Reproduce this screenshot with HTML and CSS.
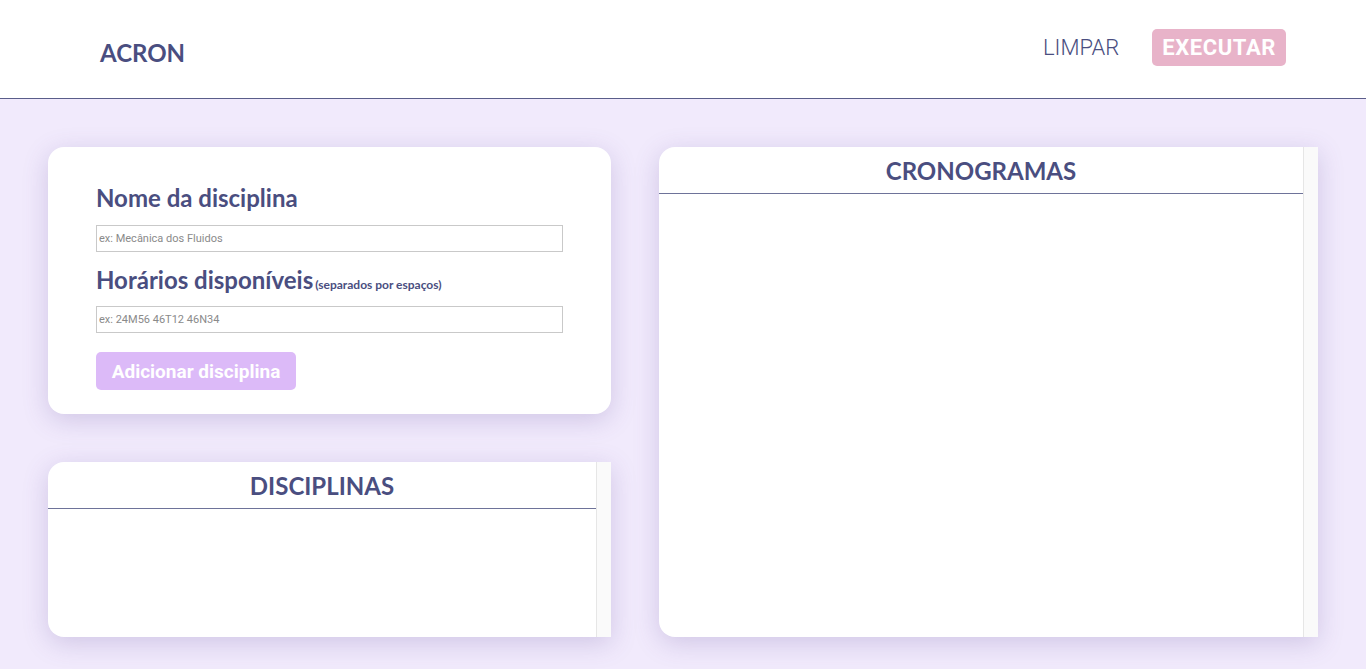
FILE: index.html
```html
<!DOCTYPE html>
<html lang="pt">
<head>
<meta charset="utf-8">
<title>ACRON</title>
<link rel="stylesheet" href="styles.css">
</head>
<body>
<header class="topbar">
  <div class="brand">ACRON</div>
  <nav class="actions">
    <button class="btn-clear">LIMPAR</button>
    <button class="btn-run">EXECUTAR</button>
  </nav>
</header>
<main class="layout">
  <div class="left-col">
    <section class="card form-card">
      <label class="field-label">Nome da disciplina</label>
      <input class="field" type="text" placeholder="ex: Mecânica dos Fluidos">
      <label class="field-label second">Horários disponíveis<span class="hint">(separados por espaços)</span></label>
      <input class="field field-second" type="text" placeholder="ex: 24M56 46T12 46N34">
      <button class="btn-add">Adicionar disciplina</button>
    </section>
    <section class="card list-card small">
      <div class="list-body">
        <h2 class="list-title">DISCIPLINAS</h2>
      </div>
      <div class="scrolltrack"></div>
    </section>
  </div>
  <section class="card list-card big">
    <div class="list-body">
      <h2 class="list-title">CRONOGRAMAS</h2>
    </div>
    <div class="scrolltrack"></div>
  </section>
</main>
</body>
</html>
```
FILE: styles.css
```css
* { box-sizing: border-box; }
html, body { margin: 0; padding: 0; }
body {
  background: #f1eafc;
  font-family: "Lato", "Roboto", sans-serif;
  color: #4a4e80;
  height: 669px;
  overflow: hidden;
}
.topbar {
  height: 99px;
  background: #ffffff;
  border-bottom: 1px solid #5a5d8a;
  display: flex;
  align-items: center;
  justify-content: space-between;
  padding: 0 80px 0 100px;
}
.brand {
  font-family: "Lato", sans-serif;
  font-weight: 700;
  font-size: 24px;
  color: #4a4e80;
  margin-top: 6px;
}
.actions {
  display: flex;
  align-items: center;
  gap: 33px;
  margin-top: -4px;
}
.btn-clear {
  background: none;
  border: none;
  padding: 0;
  font-family: "Roboto", sans-serif;
  font-weight: 300;
  font-size: 22px;
  color: #4a4e80;
}
.btn-run {
  background: #e8b3c9;
  border: none;
  border-radius: 5px;
  height: 37px;
  padding: 0 10px;
  font-family: "Roboto", sans-serif;
  font-weight: 700;
  font-size: 22px;
  letter-spacing: 0.6px;
  color: #ffffff;
}
.layout {
  display: grid;
  grid-template-columns: 563px 659px;
  gap: 48px;
  padding: 48px 48px 0 48px;
}
.left-col {
  display: flex;
  flex-direction: column;
  gap: 48px;
}
.card {
  background: #ffffff;
  border-radius: 16px;
  box-shadow: 0 6px 26px rgba(90, 70, 150, 0.22);
}
.form-card {
  height: 267px;
  padding: 36px 48px 0 48px;
  display: flex;
  flex-direction: column;
  align-items: flex-start;
}
.field-label {
  font-family: "Lato", sans-serif;
  font-weight: 700;
  font-size: 24px;
  line-height: 30px;
  color: #4a4e80;
}
.field-label.second { margin-top: 13px; }
.hint {
  font-size: 12px;
  margin-left: 2px;
}
.field {
  width: 467px;
  height: 27px;
  margin-top: 12px;
  border: 1px solid #c9c9c9;
  padding: 0 2px;
  font-family: "Roboto", sans-serif;
  font-size: 11px;
  color: #333;
}
.field.field-second { margin-top: 6px; }
.field::placeholder { color: #8a8a8a; }
.btn-add {
  margin-top: 19px;
  height: 38px;
  width: 200px;
  padding: 0;
  background: #dcbaf8;
  border: none;
  border-radius: 5px;
  font-family: "Roboto", sans-serif;
  font-weight: 700;
  font-size: 19px;
  color: #ffffff;
}
.list-card {
  display: flex;
  overflow: hidden;
  border-radius: 16px 0 0 16px;
}
.list-card.small { height: 175px; }
.list-card.big { height: 490px; }
.list-body {
  flex: 1;
}
.list-title {
  margin: 0;
  height: 47px;
  border-bottom: 1px solid #6e7399;
  text-align: center;
  font-family: "Lato", sans-serif;
  font-weight: 700;
  font-size: 24px;
  line-height: 47px;
  color: #4a4e80;
}
.scrolltrack {
  width: 15px;
  background: #fafafa;
  border-left: 1px solid #e6e6e6;
}
```
